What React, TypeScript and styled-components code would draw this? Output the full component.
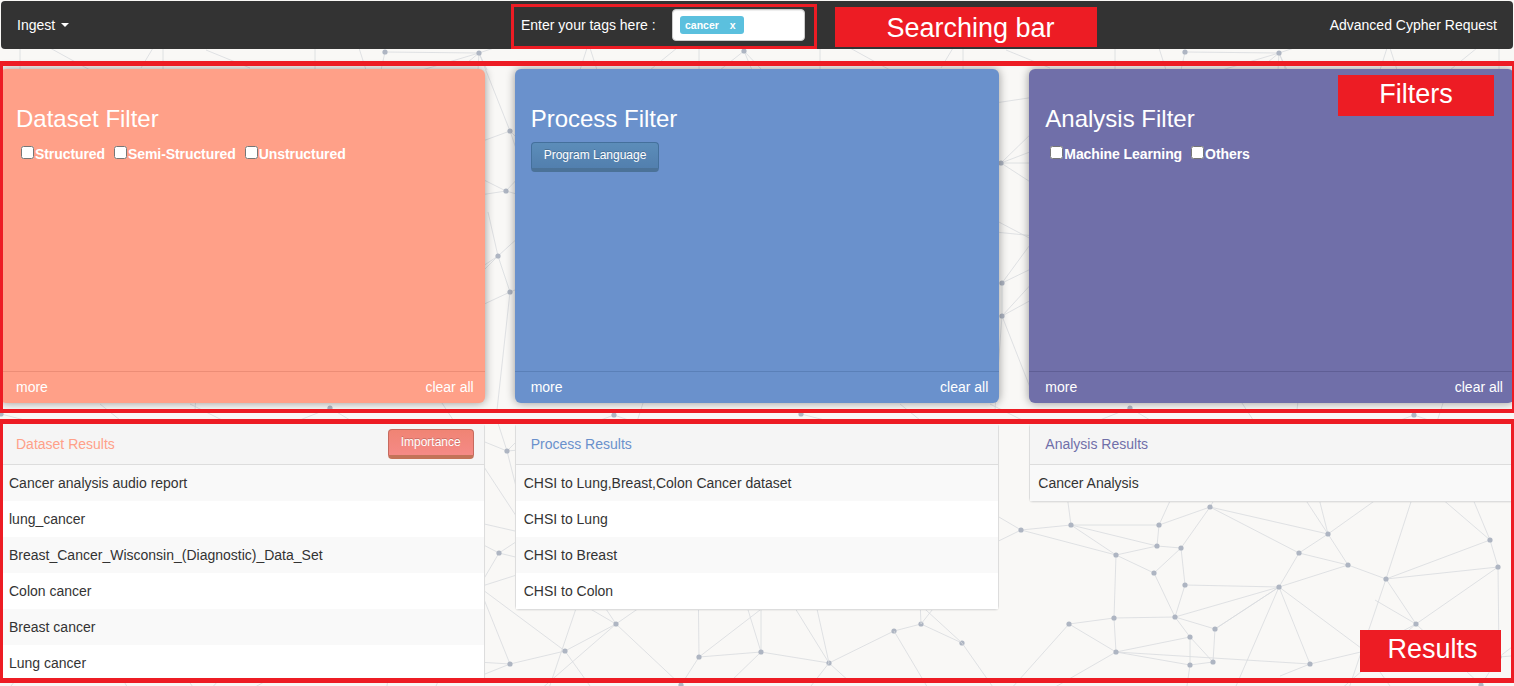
import styled, { createGlobalStyle } from "styled-components";

const NODES: Record<string, [number, number]> = {
  A: [221, 530], B: [271, 525], C: [359, 525], D: [410, 507], E: [316, 555], F: [357, 546],
  G: [381, 548], H: [354, 573], I: [385, 585], J: [528, 534], K: [499, 553], L: [548, 565],
  M: [479, 587], N: [586, 579], O: [690, 540], P: [698, 567], Q: [616, 624], R: [375, 617],
  S: [415, 629], T: [314, 618], U: [269, 624], V: [962, 643], W: [316, 652], X: [390, 637],
  Y: [413, 662], Z: [390, 665], a: [510, 664], b: [565, 651], c: [699, 657], d: [761, 652],
  e: [829, 663], f: [894, 631], g: [921, 624], h: [681, 685], i: [385, 52], j: [479, 53],
  k: [744, 51], l: [510, 131], m: [506, 191], n: [498, 256], o: [510, 292], p: [201, 163],
  q: [202, 283], r: [202, 316], s: [507, 451], t: [330, 408], u: [614, 415], v: [1, 414],
};

const EDGES =
  "A-B A-E B-C B-E B-F C-D C-F F-E F-G G-D G-H G-I E-H H-R I-M I-R E-T T-R T-W R-M R-S R-X S-M S-Y X-Y X-Z Y-Z W-Z W-X U-T U-W M-K M-L M-a M-b M-S K-J K-L J-L J-D K-D L-N N-O N-P O-P N-Q Q-P Q-b Q-h b-a c-d c-h d-e e-f f-g g-V P-c i-j q-r o-n s-J a-W".split(
    " ",
  );

// loose lines that run off under the cards and panels
const LOOSE_LINES = [
  [20, 48, 20, 70], [50, 48, 90, 70], [153, 48, 141, 68], [163, 48, 163, 70], [206, 50, 250, 68],
  [315, 48, 315, 70], [359, 48, 366, 70], [385, 52, 381, 70], [479, 53, 463, 66], [479, 53, 422, 70],
  [479, 53, 478, 70], [479, 53, 487, 70], [479, 53, 510, 131], [479, 53, 500, 46], [587, 48, 580, 70],
  [590, 48, 597, 70], [677, 48, 650, 70], [699, 48, 699, 70], [744, 51, 720, 70], [744, 51, 752, 70],
  [744, 51, 762, 70], [510, 131, 480, 142], [510, 131, 520, 141], [510, 131, 520, 160], [506, 191, 480, 178],
  [506, 191, 480, 195], [506, 191, 520, 195], [506, 191, 520, 176], [498, 256, 480, 268], [498, 256, 520, 236],
  [498, 256, 488, 212], [498, 256, 480, 274], [510, 292, 480, 306], [510, 292, 520, 288], [510, 292, 497, 410],
  [201, 163, 235, 130], [201, 163, 235, 150], [201, 163, 235, 163], [201, 163, 235, 185], [195, 103, 235, 97],
  [195, 220, 235, 241], [195, 232, 235, 236], [202, 283, 235, 238], [202, 283, 235, 267], [202, 316, 235, 280],
  [202, 316, 235, 298], [202, 316, 235, 400], [202, 316, 195, 410], [330, 408, 300, 420], [330, 408, 350, 420],
  [614, 415, 590, 424], [614, 415, 640, 424], [1, 414, 40, 424], [190, 404, 230, 424], [100, 404, 125, 424],
  [507, 451, 480, 440], [507, 451, 520, 438], [507, 451, 497, 420], [507, 451, 640, 440], [271, 525, 265, 480],
  [359, 525, 375, 490], [410, 507, 420, 490], [528, 534, 440, 400], [528, 534, 660, 440], [586, 579, 644, 400],
  [690, 540, 620, 480], [690, 540, 665, 480], [221, 530, 170, 500], [221, 530, 170, 555], [586, 579, 545, 700],
  [479, 587, 430, 700], [390, 665, 385, 700], [316, 652, 250, 690], [269, 624, 210, 690], [162, 643, 115, 600],
  [616, 624, 540, 690], [699, 657, 760, 610], [616, 624, 575, 600], [565, 651, 600, 700], [510, 664, 480, 676],
  [162, 643, 195, 690], [94, 631, 135, 700], [121, 624, 120, 600], [121, 624, 140, 600], [29, 663, 15, 600],
  [29, 663, 0, 700], [761, 652, 745, 600], [761, 652, 761, 600], [829, 663, 790, 600], [761, 652, 730, 682],
  [829, 663, 850, 682],
];

const TILE_OFFSETS = [-800, 0, 800];

function NetworkBackground() {
  return (
    <Network viewBox="0 0 1514 686" aria-hidden="true">
      {TILE_OFFSETS.map((offset) => (
        <g key={offset} transform={`translate(${offset} 0)`}>
          {EDGES.map((edge) => {
            const [from, to] = edge.split("-");
            const [x1, y1] = NODES[from];
            const [x2, y2] = NODES[to];
            return <line key={edge} x1={x1} y1={y1} x2={x2} y2={y2} stroke="#d8dade" strokeWidth="0.8" />;
          })}
          {LOOSE_LINES.map(([x1, y1, x2, y2]) => (
            <line key={`${x1}-${y1}-${x2}-${y2}`} x1={x1} y1={y1} x2={x2} y2={y2} stroke="#d8dade" strokeWidth="0.8" />
          ))}
          {Object.entries(NODES).map(([name, [cx, cy]]) => (
            <circle key={name} cx={cx} cy={cy} r="2.6" fill="#aeb5c2" />
          ))}
        </g>
      ))}
    </Network>
  );
}

interface FilterCardProps {
  title: string;
  color: string;
  line: string;
  options?: string[];
  button?: string;
}

function FilterCard({ title, color, line, options, button }: FilterCardProps) {
  return (
    <Card $color={color}>
      <CardBody>
        <CardTitle>{title}</CardTitle>
        {options && (
          <OptionRow>
            {options.map((option) => (
              <OptionLabel key={option}>
                <input type="checkbox" />
                {option}
              </OptionLabel>
            ))}
          </OptionRow>
        )}
        {button && <LanguageButton type="button">{button}</LanguageButton>}
      </CardBody>
      <CardFooter $line={line}>
        <span>more</span>
        <span>clear all</span>
      </CardFooter>
    </Card>
  );
}

interface ResultPanelProps {
  title: string;
  color: string;
  rows: string[];
  showImportance?: boolean;
}

function ResultPanel({ title, color, rows, showImportance }: ResultPanelProps) {
  return (
    <Panel>
      <PanelHeader>
        <PanelTitle $color={color}>{title}</PanelTitle>
        {showImportance && <ImportanceButton type="button">Importance</ImportanceButton>}
      </PanelHeader>
      {rows.map((row) => (
        <PanelRow key={row}>{row}</PanelRow>
      ))}
    </Panel>
  );
}

function App() {
  return (
    <Page>
      <GlobalStyle />
      <NetworkBackground />
      <Navbar>
        <IngestMenu>
          Ingest
          <Caret />
        </IngestMenu>
        <SearchGroup>
          <SearchLabel>Enter your tags here :</SearchLabel>
          <TagInput>
            <Tag>
              cancer
              <span>x</span>
            </Tag>
          </TagInput>
        </SearchGroup>
        <SearchNote>Searching bar</SearchNote>
        <NavLink>Advanced Cypher Request</NavLink>
      </Navbar>

      <FilterSection>
        <FilterFrame />
        <FilterNote>Filters</FilterNote>
        <FilterCard
          title="Dataset Filter"
          color="#ffa088"
          line="#ec8d76"
          options={["Structured", "Semi-Structured", "Unstructured"]}
        />
        <FilterCard title="Process Filter" color="#6a91cc" line="#5a80b8" button="Program Language" />
        <FilterCard
          title="Analysis Filter"
          color="#706fa9"
          line="#5f5e95"
          options={["Machine Learning", "Others"]}
        />
      </FilterSection>

      <ResultSection>
        <ResultFrame />
        <ResultNote>Results</ResultNote>
        <ResultPanel
          title="Dataset Results"
          color="#ffa088"
          showImportance
          rows={[
            "Cancer analysis audio report",
            "lung_cancer",
            "Breast_Cancer_Wisconsin_(Diagnostic)_Data_Set",
            "Colon cancer",
            "Breast cancer",
            "Lung cancer",
          ]}
        />
        <ResultPanel
          title="Process Results"
          color="#6a91cc"
          rows={["CHSI to Lung,Breast,Colon Cancer dataset", "CHSI to Lung", "CHSI to Breast", "CHSI to Colon"]}
        />
        <ResultPanel title="Analysis Results" color="#706fa9" rows={["Cancer Analysis"]} />
      </ResultSection>
    </Page>
  );
}

export default App;

const GlobalStyle = createGlobalStyle`
  html,
  body {
    margin: 0;
    height: 100%;
    overflow: hidden;
    background-color: #f9f8f6;
  }
  * {
    box-sizing: border-box;
  }
`;

const Page = styled.div`
  position: relative;
  width: 1514px;
  height: 686px;
  overflow: hidden;
  font-family: "Liberation Sans", Arial, sans-serif;
  font-size: 14px;
  line-height: 20px;
  color: #333;
`;

const Network = styled.svg`
  position: absolute;
  inset: 0;
  width: 1514px;
  height: 686px;
`;

const Navbar = styled.header`
  position: relative;
  display: flex;
  align-items: flex-start;
  height: 48px;
  margin: 1px 1px 0;
  padding-left: 16px;
  border-radius: 4px;
  background-color: #333;
  color: #fff;
`;

const IngestMenu = styled.div`
  display: flex;
  align-items: center;
  width: 494px;
  height: 48px;
`;

const Caret = styled.span`
  width: 0;
  height: 0;
  margin-left: 6px;
  border-top: 4px solid #fff;
  border-right: 4px solid transparent;
  border-left: 4px solid transparent;
`;

const SearchGroup = styled.div`
  display: flex;
  align-items: center;
  width: 306px;
  height: 45px;
  margin-top: 3px;
  padding: 0 0 3px 7px;
  border: 3px solid #ed1c24;
`;

const SearchLabel = styled.span`
  width: 151px;
  white-space: nowrap;
`;

const TagInput = styled.div`
  display: flex;
  align-items: center;
  width: 133px;
  height: 32px;
  padding-left: 7px;
  border: 1px solid #ccc;
  border-radius: 4px;
  background-color: #fff;
  box-shadow: inset 0 1px 1px rgba(0, 0, 0, 0.075);
`;

const Tag = styled.span`
  display: flex;
  align-items: center;
  gap: 11px;
  height: 18px;
  padding: 0 8px 0 5px;
  border-radius: 3px;
  background-color: #5bc0de;
  color: #fff;
  font-size: 10.5px;
  font-weight: bold;
`;

const SearchNote = styled.div`
  display: flex;
  align-items: center;
  justify-content: center;
  width: 262px;
  height: 40px;
  margin: 6px 0 0 18px;
  padding: 2px 0 0 9px;
  background-color: #ed1c24;
  color: #fff;
  font-size: 27px;
`;

const NavLink = styled.a`
  margin-left: auto;
  padding-right: 16px;
  line-height: 48px;
  color: #fff;
`;

const FilterSection = styled.section`
  position: relative;
  display: grid;
  grid-template-columns: repeat(3, 1fr);
  gap: 30px;
  height: 334px;
  margin-top: 20px;
`;

const FilterFrame = styled.div`
  position: absolute;
  z-index: 2;
  inset: -8px 0 -10px;
  border-style: solid;
  border-color: #ed1c24;
  border-width: 5px 2px 4px 3px;
  pointer-events: none;
`;

const FilterNote = styled.div`
  position: absolute;
  z-index: 2;
  top: 6px;
  right: 20px;
  display: flex;
  align-items: center;
  justify-content: center;
  width: 156px;
  height: 41px;
  padding-bottom: 4px;
  background-color: #ed1c24;
  color: #fff;
  font-size: 27px;
`;

const Card = styled.div<{ $color: string }>`
  display: flex;
  flex-direction: column;
  border-radius: 6px;
  background-color: ${(props) => props.$color};
  color: #fff;
  box-shadow: 0 0 10px rgba(0, 0, 0, 0.4);
`;

const CardBody = styled.div`
  flex: 1;
  padding: 37px 16px 0;
`;

const CardTitle = styled.h2`
  margin: 0 0 10px;
  font-size: 24px;
  font-weight: normal;
  line-height: 26px;
`;

const OptionRow = styled.div`
  display: flex;
  gap: 9px;
  padding: 2px 0 0 5px;
`;

const OptionLabel = styled.label`
  display: flex;
  align-items: center;
  font-weight: bold;
  letter-spacing: -0.08px;
  white-space: nowrap;

  input {
    width: 13px;
    height: 13px;
    margin: -3px 1px 0 0;
  }
`;

const LanguageButton = styled.button`
  display: block;
  height: 30px;
  padding: 0 12px 1px;
  border: 1px solid #44709c;
  border-bottom: 4px solid #4b7298;
  border-radius: 4px;
  background: linear-gradient(#5c8db9, #527fae);
  color: #fff;
  font-family: inherit;
  font-size: 12px;
  text-shadow: 0 -1px 0 rgba(0, 0, 0, 0.2);
`;

const CardFooter = styled.div<{ $line: string }>`
  display: flex;
  align-items: center;
  justify-content: space-between;
  height: 32px;
  padding: 0 11px 2px 16px;
  border-top: 1px solid ${(props) => props.$line};
`;

const ResultSection = styled.section`
  position: relative;
  display: grid;
  grid-template-columns: repeat(3, 1fr);
  gap: 30px;
  align-items: start;
  height: 259px;
  margin-top: 20px;
`;

const ResultFrame = styled.div`
  position: absolute;
  z-index: 2;
  inset: -4px 0 -1px;
  border-style: solid;
  border-color: #ed1c24;
  border-width: 5px 3px 5px 3px;
  pointer-events: none;
`;

const ResultNote = styled.div`
  position: absolute;
  z-index: 2;
  right: 13px;
  bottom: 10px;
  display: flex;
  align-items: center;
  justify-content: center;
  width: 141px;
  height: 42px;
  padding: 0 0 4px 4px;
  background-color: #ed1c24;
  color: #fff;
  font-size: 27px;
`;

const Panel = styled.div`
  border: 1px solid #ddd;
  border-radius: 4px;
  background-color: #fff;
  box-shadow: 0 1px 1px rgba(0, 0, 0, 0.05);
`;

const PanelHeader = styled.div`
  display: flex;
  align-items: center;
  justify-content: space-between;
  height: 41px;
  padding: 0 10px 0 15px;
  border-bottom: 1px solid #ddd;
  background-color: #f5f5f5;
`;

const PanelTitle = styled.span<{ $color: string }>`
  color: ${(props) => props.$color};
`;

const ImportanceButton = styled.button`
  height: 30px;
  padding: 0 12px 2px;
  border: 1px solid #c66a5e;
  border-bottom: 4px solid #c37358;
  border-radius: 4px;
  background: linear-gradient(#f08474, #f58a86);
  color: #fff;
  font-family: inherit;
  font-size: 12px;
  text-shadow: 0 -1px 0 rgba(0, 0, 0, 0.2);
`;

const PanelRow = styled.div`
  height: 36px;
  padding: 8px;
  background-color: #fff;

  &:nth-child(even) {
    background-color: #f9f9f9;
  }
`;
